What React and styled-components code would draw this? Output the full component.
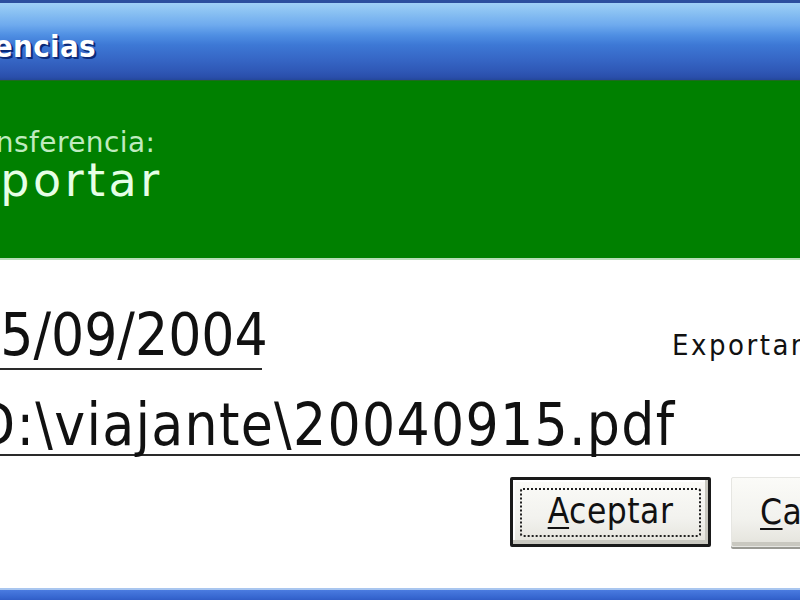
import React from "react";
import styled, { createGlobalStyle } from "styled-components";

const Global = createGlobalStyle`
  html, body { margin: 0; padding: 0; background: #ffffff; overflow: hidden; }
  body { width: 800px; height: 600px; }
  #root { width: 800px; height: 600px; overflow: hidden; }
`;

const FONT = `"DejaVu Sans Condensed", "DejaVu Sans", Tahoma, sans-serif`;
const WIDE = `"DejaVu Sans", Tahoma, sans-serif`;

const Window = styled.div`
  width: 1100px;
  margin-left: -140px;
  display: flex;
  flex-direction: column;
  font-family: ${FONT};
  font-stretch: condensed;
`;

const TitleBar = styled.div`
  box-sizing: border-box;
  height: 80px;
  border-top: 3px solid #2c4f9e;
  padding: 28px 0 0 2px;
  background: linear-gradient(
    to bottom,
    #9fd0f6 0px,
    #8cc3f3 8px,
    #6eaaee 22px,
    #4f8fe3 32px,
    #3d78d5 42px,
    #3667c6 56px,
    #2f58b6 68px,
    #2a4fab 74px,
    #24489a 77px
  );
`;

const TitleText = styled.div`
  font-size: 31px;
  line-height: 1;
  font-weight: bold;
  color: #ffffff;
  letter-spacing: 0.3px;
  text-shadow: 2px 2px 0 #0c2a78, 1px 1px 1px #14349a;
`;

const Banner = styled.div`
  box-sizing: border-box;
  height: 180px;
  background: #008000;
  border-top: 1px solid #1f6a20;
  border-bottom: 2px solid #b8dcb8;
  padding: 48px 0 0 77px;
  display: flex;
  flex-direction: column;
  font-family: ${WIDE};
  font-stretch: normal;
`;

const BannerLabel = styled.div`
  line-height: 1;
  color: ${(p) => p.$color};
  letter-spacing: ${(p) => p.$spacing};
  font-size: ${(p) => p.$size};
  margin-left: ${(p) => p.$indent || "0px"};
`;

const Body = styled.div`
  box-sizing: border-box;
  height: 328px;
  background: #ffffff;
  padding: 46px 28px 0 107px;
  display: flex;
  flex-direction: column;
`;

const Row = styled.div`
  display: flex;
  align-items: baseline;
`;

const Field = styled.div`
  width: ${(p) => p.$width};
  font-size: 58px;
  line-height: 1;
  color: #111111;
  letter-spacing: ${(p) => p.$spacing};
  padding-bottom: ${(p) => p.$pad};
  padding-left: ${(p) => p.$inset};
  border-bottom: 2px solid #2a2a2a;
  margin-left: -6px;
  white-space: nowrap;
`;

const RightColumn = styled.div`
  margin-left: auto;
  width: 260px;
  font-size: 29px;
  line-height: 1;
  color: #111111;
  letter-spacing: 2.5px;
`;

const PathField = styled(Field)`
  margin-top: 26px;
`;

const ButtonRow = styled.div`
  display: flex;
  justify-content: flex-end;
  gap: 20px;
  margin-top: 21px;
`;

const Button = styled.div`
  box-sizing: border-box;
  width: 201px;
  height: 70px;
  display: flex;
  align-items: center;
  justify-content: center;
  font-size: 35px;
  color: #111111;
  letter-spacing: 0.5px;
  background: linear-gradient(to bottom, #fbfbf8 0%, #f2f2ee 60%, #e4e3dc 100%);
  border: ${(p) => (p.$default ? "3px solid #1a1a1a" : "1px solid #e6e6e2")};
  border-radius: 2px;
  box-shadow: ${(p) =>
    p.$default
      ? "inset -3px -4px 0 #c9c8c0, inset 2px 2px 0 #ffffff"
      : "inset -2px -4px 0 #c9c8c0, 0 2px 0 #9a9a94"};
`;

const Focus = styled.div`
  box-sizing: border-box;
  width: 181px;
  height: 49px;
  border: 2px dotted #202020;
  border-radius: 3px;
  display: flex;
  align-items: center;
  justify-content: center;
  padding-bottom: 2px;
`;

const Key = styled.span`
  text-decoration: underline;
  text-decoration-thickness: 2px;
  text-underline-offset: 4px;
`;

const Spacer = styled.div`
  flex: 1;
`;

const BottomFrame = styled.div`
  height: 12px;
  border-top: 2px solid #a9c6ef;
  background: linear-gradient(to bottom, #4a7be0 0%, #3767d0 60%, #2c57bf 100%);
`;

export default function App() {
  return (
    <>
      <Global />
      <Window>
        <TitleBar>
          <TitleText>Transferencias</TitleText>
        </TitleBar>
        <Banner>
          <BannerLabel $color="#bfeabf" $spacing="0.4px" $size="28px" $indent="16px">
            Transferencia:
          </BannerLabel>
          <BannerLabel $color="#e6ffe6" $spacing="3.5px" $size="46px">
            Exportar
          </BannerLabel>
        </Banner>
        <Body>
          <Row>
            <Field $width="295px" $spacing="0px" $pad="4px" $inset="6px">
              15/09/2004
            </Field>
            <RightColumn>Exportar a:</RightColumn>
          </Row>
          <PathField $width="auto" $spacing="1.3px" $pad="0px" $inset="14px">
            D:\viajante\20040915.pdf
          </PathField>
          <ButtonRow>
            <Button $default>
              <Focus>
                <span>
                  <Key>A</Key>ceptar
                </span>
              </Focus>
            </Button>
            <Button>
              <span>
                <Key>C</Key>ancelar
              </span>
            </Button>
          </ButtonRow>
          <Spacer />
        </Body>
        <BottomFrame />
      </Window>
    </>
  );
}
